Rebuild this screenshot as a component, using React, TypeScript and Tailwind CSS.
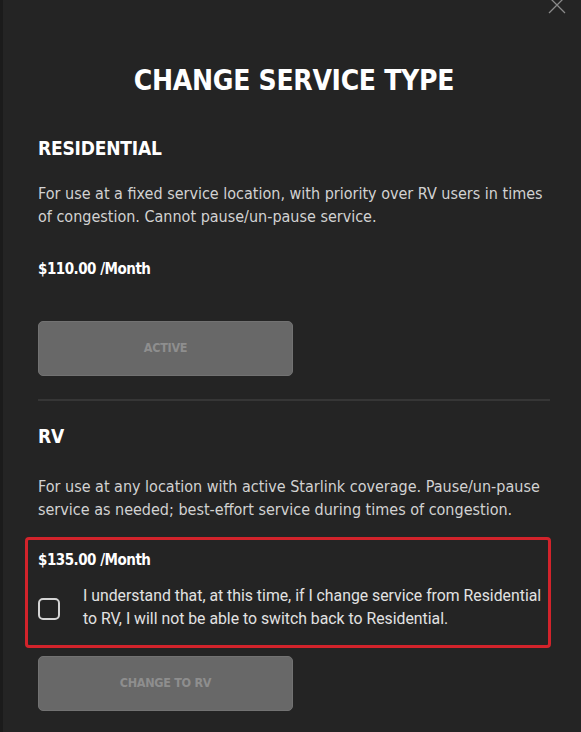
import React from 'react'

const din = { fontFamily: '"Liberation Sans Narrow", "DejaVu Sans Condensed", "Liberation Sans", sans-serif' }
const roboto = { fontFamily: 'Roboto, "Liberation Sans", sans-serif' }

function GreyButton({ label }: { label: string }) {
  return (
    <button
      type="button"
      disabled
      className="flex h-[55px] w-[255px] items-center justify-center rounded-[5px] border border-[#727272] bg-[#686868] text-[12.5px] font-bold tracking-tight text-[#8e8e8e]"
      style={din}
    >
      {label}
    </button>
  )
}

export default function App() {
  return (
    <div className="relative h-[732px] w-[581px] overflow-hidden border-l-[3px] border-[#1b1b1b] bg-[#242424]">
      {/* Close button */}
      <button type="button" className="absolute left-[543px] top-[-6px] h-[22px] w-[22px] text-[#8a8a8a]">
        <svg viewBox="0 0 22 22" className="h-full w-full" fill="none" stroke="currentColor" strokeWidth="1.3">
          <path d="M3 3 L19 19 M19 3 L3 19" />
        </svg>
      </button>

      <div className="pl-[35px] pr-[31px] pt-[66px]" style={din}>
        <h1 className="text-center text-[28px] font-bold leading-[30px] tracking-[-0.3px] text-white">
          CHANGE SERVICE TYPE
        </h1>

        {/* Residential */}
        <h2 className="mt-[40px] text-[19px] font-bold leading-[24px] tracking-[-0.2px] text-white">RESIDENTIAL</h2>
        <p className="mt-[22px] text-[16px] leading-[23px] text-[#d2d2d2]">
          For use at a fixed service location, with priority over RV users in times of congestion. Cannot
          pause/un-pause service.
        </p>
        <p className="mt-[31px] text-[15px] font-bold leading-[20px] tracking-[-0.5px] text-white">$110.00 /Month</p>
        <div className="mt-[42px]">
          <GreyButton label="ACTIVE" />
        </div>

        <div className="mt-[23px] h-[2px] bg-[#363636]" />

        {/* RV */}
        <h2 className="mt-[23px] text-[19px] font-bold leading-[24px] tracking-[-0.2px] text-white">RV</h2>
        <p className="mt-[27px] text-[16px] leading-[23px] text-[#d2d2d2]">
          For use at any location with active Starlink coverage. Pause/un-pause service as needed; best-effort
          service during times of congestion.
        </p>

        <div className="-mr-px ml-[-13px] mt-[16px] rounded-[4px] border-[3px] border-[#d2232b] pb-[15px] pl-[10px] pr-px pt-[10px]">
          <p className="text-[15px] font-bold leading-[20px] tracking-[-0.5px] text-white">$135.00 /Month</p>
          <label className="mt-[14px] flex items-center gap-[23px]">
            <span className="mt-[4px] h-[22px] w-[22px] shrink-0 rounded-[5px] border-2 border-[#d4d4d4]" />
            <span className="text-[15.8px] leading-[23px] text-[#e2e2e2]" style={roboto}>
              I understand that, at this time, if I change service from Residential to RV, I will not be able to
              switch back to Residential.
            </span>
          </label>
        </div>

        <div className="mt-[8px]">
          <GreyButton label="CHANGE TO RV" />
        </div>
      </div>
    </div>
  )
}
